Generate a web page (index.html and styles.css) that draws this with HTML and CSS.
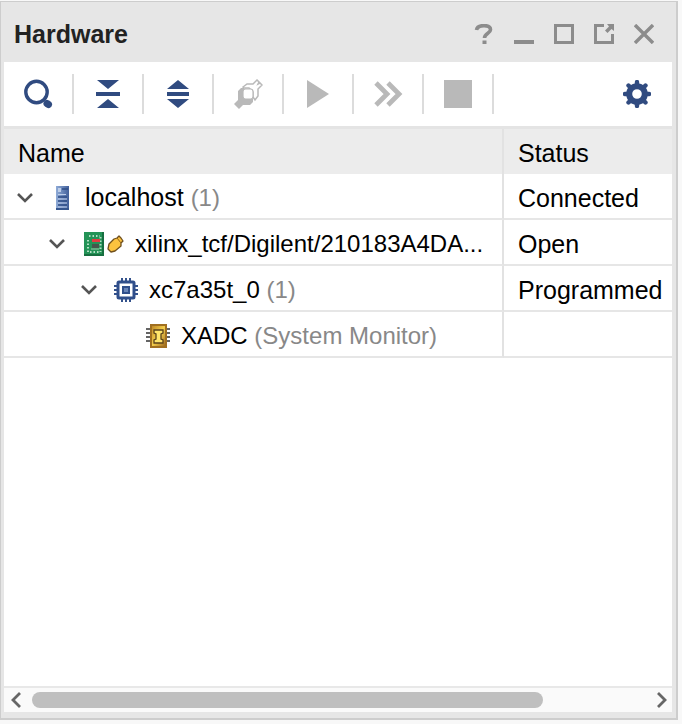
FILE: index.html
```html
<!DOCTYPE html>
<html lang="en">
<head>
<meta charset="utf-8">
<title>Hardware</title>
<link rel="stylesheet" href="styles.css">
</head>
<body>
<main class="panel">
  <header class="titlebar">
    <h1 class="title">Hardware</h1>
    <div class="window-actions">
      <button class="window-btn" aria-label="Help"><svg width="20" height="20" viewBox="0 0 20 20"><path d="M2.500 6C3 3 6 1.600 10 1.600s6.500 1.400 6.500 4.200c0 3.500-6 3.500-6 8.200" fill="none" stroke="currentColor" stroke-width="3.600"/><path d="M8.500 16.500h4V20h-4z" fill="currentColor"/></svg></button>
      <button class="window-btn" aria-label="Minimize"><svg width="20" height="20"><path d="M0 16h20v4H0z" fill="currentColor"/></svg></button>
      <button class="window-btn" aria-label="Maximize"><svg width="20" height="20"><path d="M1.500 1.500h17v17h-17z" fill="none" stroke="currentColor" stroke-width="3"/></svg></button>
      <button class="window-btn" aria-label="Float"><svg width="20" height="20"><path d="M10 1.500H1.500v17h17V10" fill="none" stroke="currentColor" stroke-width="3"/><path d="M13 0h7v7l-2.500-2-4 4-2.500-2.500 4-4z" fill="currentColor"/></svg></button>
      <button class="window-btn" aria-label="Close"><svg width="20" height="20"><path d="M1 1l18 18M19 1L1 19" fill="none" stroke="currentColor" stroke-width="3.400"/></svg></button>
    </div>
  </header>

  <div class="toolbar" role="toolbar" aria-label="Hardware tools">
    <button class="tool" aria-label="Search"><svg width="30" height="30" viewBox="0 0 30 30"><circle cx="13.500" cy="13" r="10.700" fill="none" stroke="currentColor" stroke-width="3.400"/><path d="M24 24.500l1.500 1" stroke="currentColor" stroke-width="7" stroke-linecap="round"/></svg></button>
    <button class="tool" aria-label="Collapse all"><svg width="24" height="30" viewBox="0 0 24 30"><path d="M1 1h22l-11 9zM0 13h24v4H0zM1 29h22l-11-9z" fill="currentColor"/></svg></button>
    <button class="tool" aria-label="Expand all"><svg width="24" height="30" viewBox="0 0 24 30"><path d="M1 10h22L12 1zM1 13h22v4H1zM1 20h22l-11 9z" fill="currentColor"/></svg></button>
    <button class="tool" aria-label="Auto connect" disabled><svg width="30" height="30" viewBox="0 0 30 30"><path d="M1 25l4-4V12l3-3h3v11h9v3l-3 3h-7l-4 4z" fill="currentColor"/><path d="M10 8l4-3h6l4-4 2 2-1 2 2-1 2 2-4 4v7l-3 4-2-3v-5l-4-4h-5z" fill="#fff" stroke="currentColor" stroke-width="1.500"/><rect x="10" y="10" width="10" height="10" rx="2.500" fill="#fff" stroke="currentColor" stroke-width="1.200"/></svg></button>
    <button class="tool" aria-label="Run trigger" disabled><svg width="24" height="30" viewBox="0 0 24 30"><path d="M1 1l22 14L1 29z" fill="currentColor"/></svg></button>
    <button class="tool" aria-label="Run immediate" disabled><svg width="30" height="30" viewBox="0 0 30 30"><path d="M3 4l11 11L3 26M15 4l11 11-11 11" fill="none" stroke="currentColor" stroke-width="4.800"/></svg></button>
    <button class="tool" aria-label="Stop" disabled><svg width="28" height="28"><path d="M0 0h28v28H0z" fill="currentColor"/></svg></button>
    <button class="tool settings" aria-label="Settings"><svg width="28" height="28" viewBox="-14 -14 28 28"><circle r="7.800" fill="none" stroke="currentColor" stroke-width="6"/><path d="M0-12V-9M0 12V9M-12 0H-9M12 0H9M-8.500-8.500l2 2M8.500 8.500l-2-2M8.500-8.500l-2 2M-8.500 8.500l2-2" stroke="currentColor" stroke-width="4.400" stroke-linecap="round"/></svg></button>
  </div>

  <div class="content">
    <table class="tree">
      <colgroup><col><col class="status-col"></colgroup>
      <thead><tr><th>Name</th><th>Status</th></tr></thead>
      <tbody>
        <tr>
          <td><div class="node level-0">
            <button class="toggle" aria-label="Collapse localhost"><svg width="16" height="10"><path d="M1 1l7 7 7-7" fill="none" stroke="currentColor" stroke-width="2.600"/></svg></button>
            <svg class="icon" width="24" height="24" viewBox="0 0 24 24"><defs><linearGradient id="server"><stop stop-color="#8fabd7"/><stop offset="1" stop-color="#415f9a"/></linearGradient></defs><path d="M6 0h13v24H6z" fill="url(#server)"/><path d="M12 3h6M8 11h9M8 15h9M8 19h9" stroke="#2f4e87" stroke-width="1.500"/><path d="M8 2h3v4H8zM8 8h8v1H8zM8 12.500h9v1H8zM8 16.500h9v1H8zM8 20.500h9v1H8z" fill="#bdcee9"/><path d="M6 22h13v2H6z" fill="#36568e"/></svg>
            <span class="label">localhost <span class="hint">(1)</span></span>
          </div></td><td>Connected</td>
        </tr>
        <tr>
          <td><div class="node level-1">
            <button class="toggle" aria-label="Collapse target"><svg width="16" height="10"><path d="M1 1l7 7 7-7" fill="none" stroke="currentColor" stroke-width="2.600"/></svg></button>
            <svg class="icon" width="42" height="24" viewBox="0 0 42 24"><path d="M2 0h20v24H2z" fill="#249357"/><path d="M20 0h2v24H2v-2h18z" fill="#176f40"/><path d="M7 4h11M6 8v12M18.500 5v15M8 20h10" stroke="#b4dfc4" stroke-width="2" stroke-dasharray="1.500 2" fill="none"/><path d="M10 7h8v3h-8z" fill="#e33d42"/><path d="M10 12h7v4h-7z" fill="#45574b"/><path d="M9 17h8" stroke="#9bc6a9"/><path d="M27 12l5-5 3-1 2-2 2 2 2 3-2 2v3l-6 5-4 1-3-3z" fill="#fcc23f" stroke="#70501d" stroke-width="1.300" stroke-linejoin="round"/><path d="M35 6l4 5" stroke="#91651d"/></svg>
            <span class="label">xilinx_tcf/Digilent/210183A4DA...</span>
          </div></td><td>Open</td>
        </tr>
        <tr>
          <td><div class="node level-2">
            <button class="toggle" aria-label="Collapse xc7a35t_0"><svg width="16" height="10"><path d="M1 1l7 7 7-7" fill="none" stroke="currentColor" stroke-width="2.600"/></svg></button>
            <svg class="icon" width="24" height="24" viewBox="0 0 24 24"><path d="M8 0v24M12 0v24M16 0v24M0 8h24M0 12h24M0 16h24" stroke="#34528c" stroke-width="2"/><rect x="4" y="4" width="16" height="16" rx="1" fill="#fff" stroke="#304f8b" stroke-width="3"/><path d="M8 8h8v8H8z" fill="#304f8b"/><path d="M10 10h4v4h-4z" fill="#6985b8"/></svg>
            <span class="label">xc7a35t_0 <span class="hint">(1)</span></span>
          </div></td><td>Programmed</td>
        </tr>
        <tr>
          <td><div class="node level-3">
            <span class="toggle"></span>
            <svg class="icon" width="24" height="24" viewBox="0 0 24 24"><defs><linearGradient id="gold" x2="1" y2="1"><stop stop-color="#b98222"/><stop offset=".5" stop-color="#f5cf4c"/><stop offset="1" stop-color="#96601a"/></linearGradient></defs><path d="M0 5h24M0 9h24M0 13h24M0 17h24" stroke="#333" stroke-width="1.600"/><rect x="5" y="1" width="15" height="22" fill="url(#gold)" stroke="#a06f20" stroke-width="2"/><path d="M8 6h9v3l-2 1v5l2 1v3H8v-3l2-1v-5L8 9z" fill="#ffe56b" stroke="#5b431c" stroke-width="1.300"/></svg>
            <span class="label">XADC <span class="hint">(System Monitor)</span></span>
          </div></td><td></td>
        </tr>
      </tbody>
    </table>
  </div>

  <div class="scrollbar">
    <button class="scroll-btn" aria-label="Scroll left"><svg width="10" height="16"><path d="M9 1L2 8l7 7" fill="none" stroke="currentColor" stroke-width="2.800"/></svg></button>
    <div class="track"><div class="thumb"></div></div>
    <button class="scroll-btn" aria-label="Scroll right"><svg width="10" height="16"><path d="M1 1l7 7-7 7" fill="none" stroke="currentColor" stroke-width="2.800"/></svg></button>
  </div>
</main>
</body>
</html>
```
FILE: styles.css
```css
* { box-sizing: border-box; }

body {
  margin: 0;
  min-height: 100vh;
  display: flex;
  padding: 1px 4px 4px 0;
  background: #f8f8f8;
  color: #000;
  font-family: "Liberation Sans", Arial, sans-serif;
  font-size: 25px;
  line-height: 28px;
}

svg { display: block; flex: none; }

button {
  display: flex;
  align-items: center;
  justify-content: center;
  padding: 0;
  border: 0;
  background: none;
  color: inherit;
  font: inherit;
}

.panel {
  flex: 1;
  min-width: 0;
  display: flex;
  flex-direction: column;
  padding: 0 4px 6px 3px;
  border: 1px solid #cdcdcd;
  border-right-width: 2px;
  border-bottom-width: 2px;
  background: #e6e6e6;
}

.titlebar {
  display: flex;
  align-items: center;
  justify-content: space-between;
  height: 60px;
  padding: 4px 8px 0 10px;
}

.title {
  margin: 0;
  color: #222;
  font-size: 25px;
  font-weight: bold;
}

.window-actions { display: flex; color: #8c8c8c; }
.window-btn { width: 40px; height: 40px; }

.toolbar {
  display: flex;
  height: 64px;
  padding: 12px 0;
  background: #fff;
  color: #304b80;
}

.tool {
  width: 70px;
  height: 40px;
  border-right: 2px solid #dcdcdc;
}

.tool:disabled { color: #b9b9b9; }

.settings {
  margin-left: auto;
  border-right: 0;
}

.content {
  flex: 1;
  border-top: 3px solid #e4e4e4;
  border-bottom: 2px solid #e8e8e8;
  background: #fff;
}

.tree {
  width: 100%;
  table-layout: fixed;
  border-collapse: separate;
  border-spacing: 0;
}

.status-col { width: 168px; }

.tree th,
.tree td {
  height: 46px;
  padding: 3px 0 0 14px;
  border-bottom: 2px solid #e6e6e6;
  text-align: left;
  font-weight: normal;
  white-space: nowrap;
}

.tree th {
  height: 45px;
  border-bottom: 0;
  background: #ececec;
}

.tree th:first-child,
.tree td:first-child { border-right: 2px solid #e2e2e2; }

.tree td:first-child { padding-left: 13px; }

.node { display: flex; align-items: center; font-size: 24px; }
.level-0 { font-size: 25px; }
.level-1 { padding-left: 32px; }
.level-2 { padding-left: 64px; }
.level-3 { padding-left: 96px; }

.toggle { flex: none; width: 16px; color: #555; }
.icon { margin: 0 11px 0 17px; }
.hint { color: #888; font-size: 24px; }

.scrollbar {
  display: flex;
  align-items: center;
  height: 24px;
  background: #fafafa;
}

.scroll-btn { width: 24px; height: 24px; color: #666; }
.scroll-btn:last-child { width: 20px; }
.track { flex: 1; padding: 0 4px; }

.thumb {
  width: 83%;
  height: 16px;
  border-radius: 8px;
  background: #bfbfbf;
}
```
